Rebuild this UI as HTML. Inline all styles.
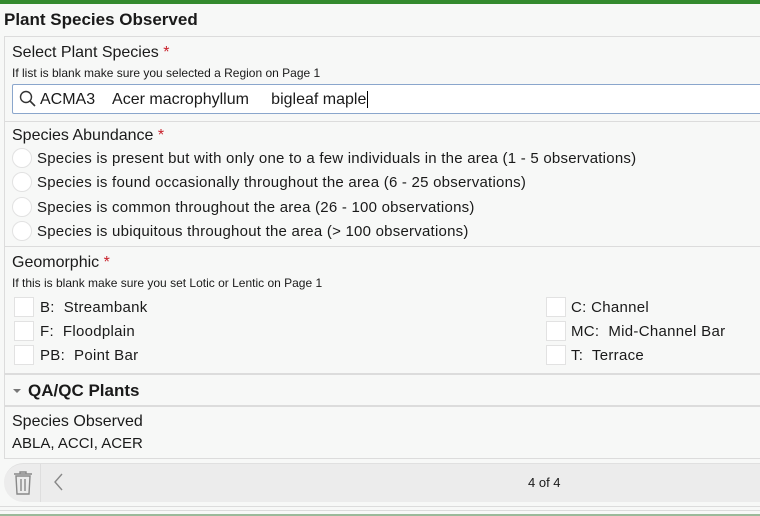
<!DOCTYPE html>
<html><head><style>
*{margin:0;padding:0;box-sizing:border-box}
body{width:760px;height:516px;background:#f7f8f7;font-family:"Liberation Sans",sans-serif;color:#1a1a1a;position:relative;overflow:hidden}
.a{position:absolute;white-space:nowrap}
.l{font-size:16px}
.s{font-size:12px}
.h{position:absolute;left:4px;right:0;height:1px;background:#dcdcdc}
.r{position:absolute;left:12px;width:20px;height:20px;border-radius:50%;background:#fff;border:1px solid #e2e2e2}
.c{position:absolute;width:20px;height:20px;background:#fff;border:1px solid #e2e2e2}
.star{color:#c8202a}
.rt{font-size:15px;letter-spacing:0.23px}
.ct{font-size:15px;letter-spacing:0.3px}
</style></head><body>
<div class="a" style="left:0;top:0;width:760px;height:4px;background:#338a2e"></div>
<div class="a" style="left:4px;top:10px;font-size:17px;font-weight:bold">Plant Species Observed</div>
<div class="a" style="left:4px;top:36px;width:756px;height:423px;border:1px solid #dcdcdc;border-right:none"></div>
<div class="a l" style="left:12px;top:44px">Select Plant Species <span class="star">*</span></div>
<div class="a s" style="left:12px;top:66px">If list is blank make sure you selected a Region on Page 1</div>
<div class="a" style="left:12px;top:84px;width:750px;height:30px;background:#fff;border:1px solid #8aa6cc;border-radius:2px"></div>
<svg class="a" style="left:18px;top:89px" width="20" height="20" viewBox="0 0 20 20"><circle cx="8" cy="8" r="5.5" fill="none" stroke="#333" stroke-width="1.4"/><line x1="12" y1="12" x2="17" y2="17" stroke="#333" stroke-width="1.6"/></svg>
<div class="a l" style="left:40px;top:91px">ACMA3 &nbsp;&nbsp; Acer macrophyllum &nbsp;&nbsp;&nbsp; bigleaf maple<span style="border-left:1px solid #000;margin-left:1px"></span></div>
<div class="h" style="top:121px"></div>
<div class="a l" style="left:12px;top:127px">Species Abundance <span class="star">*</span></div>
<div class="r" style="top:148px"></div><div class="a rt" style="left:37px;top:150px">Species is present but with only one to a few individuals in the area (1 - 5 observations)</div>
<div class="r" style="top:172px"></div><div class="a rt" style="left:37px;top:174px">Species is found occasionally throughout the area (6 - 25 observations)</div>
<div class="r" style="top:197px"></div><div class="a rt" style="left:37px;top:199px">Species is common throughout the area (26 - 100 observations)</div>
<div class="r" style="top:221px"></div><div class="a rt" style="left:37px;top:223px">Species is ubiquitous throughout the area (&gt; 100 observations)</div>
<div class="h" style="top:246px"></div>
<div class="a l" style="left:12px;top:254px">Geomorphic <span class="star">*</span></div>
<div class="a s" style="left:12px;top:276px">If this is blank make sure you set Lotic or Lentic on Page 1</div>
<div class="c" style="left:14px;top:297px"></div><div class="a ct" style="left:40px;top:299px">B:&nbsp; Streambank</div>
<div class="c" style="left:14px;top:321px"></div><div class="a ct" style="left:40px;top:323px">F:&nbsp; Floodplain</div>
<div class="c" style="left:14px;top:345px"></div><div class="a ct" style="left:40px;top:347px">PB:&nbsp; Point Bar</div>
<div class="c" style="left:546px;top:297px"></div><div class="a ct" style="left:571px;top:299px">C: Channel</div>
<div class="c" style="left:546px;top:321px"></div><div class="a ct" style="left:571px;top:323px">MC:&nbsp; Mid-Channel Bar</div>
<div class="c" style="left:546px;top:345px"></div><div class="a ct" style="left:571px;top:347px">T:&nbsp; Terrace</div>
<div class="h" style="top:373px;height:2px"></div>
<svg class="a" style="left:12px;top:387px" width="10" height="8"><polygon points="1,2 9,2 5,6" fill="#777"/></svg>
<div class="a" style="left:28px;top:381px;font-size:17px;font-weight:bold">QA/QC Plants</div>
<div class="h" style="top:405px;height:2px"></div>
<div class="a l" style="left:12px;top:413px">Species Observed</div>
<div class="a l" style="left:12px;top:435px;font-size:15px">ABLA, ACCI, ACER</div>
<div class="a" style="left:4px;top:463px;width:756px;height:39px;background:#ececec;border-radius:20px 0 0 20px;border-top:1px solid #e0e0e0"></div>
<div class="a" style="left:40px;top:464px;width:1px;height:38px;background:#dedede"></div>
<svg class="a" style="left:12px;top:470px" width="22" height="26" viewBox="0 0 22 26"><g fill="none" stroke="#888" stroke-width="1.4"><line x1="2" y1="4" x2="20" y2="4"/><path d="M8 4V2h6v2"/><path d="M4 6h14l-1 18H5z"/><line x1="9" y1="9" x2="9" y2="21"/><line x1="13" y1="9" x2="13" y2="21"/></g></svg>
<svg class="a" style="left:52px;top:473px" width="12" height="18"><polyline points="10,1 3,9 10,17" fill="none" stroke="#888" stroke-width="1.4"/></svg>
<div class="a" style="left:528px;top:475px;font-size:13px">4 of 4</div>
<div class="h" style="top:506px;left:0"></div>
<div class="h" style="top:510px;left:0"></div>
<div class="a" style="left:0;top:514px;width:760px;height:2px;background:#9bb99a"></div>
</body></html>
